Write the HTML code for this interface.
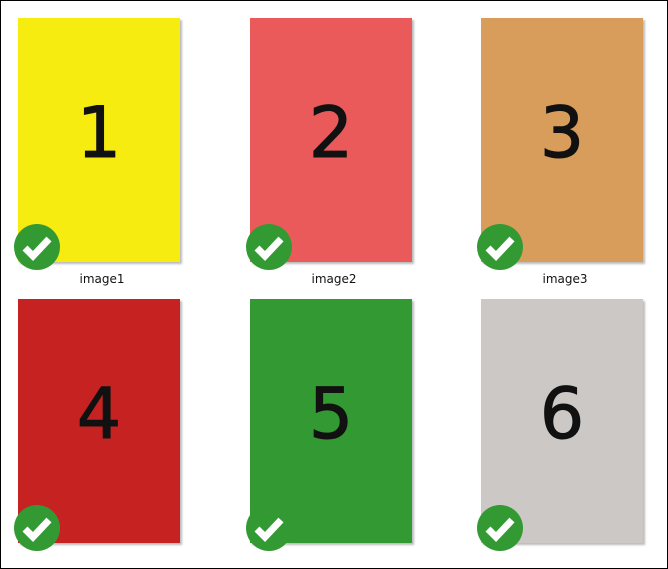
<!DOCTYPE html><html><head><style>
body{margin:0;width:668px;height:569px;background:#fff;position:relative;overflow:hidden;font-family:"DejaVu Sans","Liberation Sans",sans-serif}
.frame{position:absolute;left:0;top:0;width:666px;height:567px;border:1px solid #000}
.c{position:absolute;width:162px;height:244px;box-sizing:border-box;padding-bottom:14px;box-shadow:2px 2px 2px #bbb;display:flex;align-items:center;justify-content:center;font-size:70px;color:#111;-webkit-text-stroke:1px #111}
.k{position:absolute;width:46px;height:46px;border-radius:50%;background:#339933}
.k svg{position:absolute;left:0;top:0}
.l{position:absolute;width:162px;text-align:center;font-size:12px;color:#111}
</style></head><body>
<div class="frame"></div>
<div class="c" style="left:18px;top:18px;background:#f7ec10">1</div>
<div class="c" style="left:250px;top:18px;background:#ea5a5a">2</div>
<div class="c" style="left:481px;top:18px;background:#d89d5a">3</div>
<div class="c" style="left:18px;top:299px;background:#c62222">4</div>
<div class="c" style="left:250px;top:299px;background:#339933">5</div>
<div class="c" style="left:481px;top:299px;background:#ccc8c6">6</div>
<div class="l" style="left:21px;top:272px">image1</div>
<div class="l" style="left:253px;top:272px">image2</div>
<div class="l" style="left:484px;top:272px">image3</div>
<div class="k" style="left:14px;top:224px"><svg width="46" height="46"><path d="M11 24 L19 32 L35 15" stroke="#fff" stroke-width="7" fill="none"/></svg></div>
<div class="k" style="left:246px;top:224px"><svg width="46" height="46"><path d="M11 24 L19 32 L35 15" stroke="#fff" stroke-width="7" fill="none"/></svg></div>
<div class="k" style="left:477px;top:224px"><svg width="46" height="46"><path d="M11 24 L19 32 L35 15" stroke="#fff" stroke-width="7" fill="none"/></svg></div>
<div class="k" style="left:14px;top:505px"><svg width="46" height="46"><path d="M11 24 L19 32 L35 15" stroke="#fff" stroke-width="7" fill="none"/></svg></div>
<div class="k" style="left:246px;top:505px"><svg width="46" height="46"><path d="M11 24 L19 32 L35 15" stroke="#fff" stroke-width="7" fill="none"/></svg></div>
<div class="k" style="left:477px;top:505px"><svg width="46" height="46"><path d="M11 24 L19 32 L35 15" stroke="#fff" stroke-width="7" fill="none"/></svg></div>
</body></html>
